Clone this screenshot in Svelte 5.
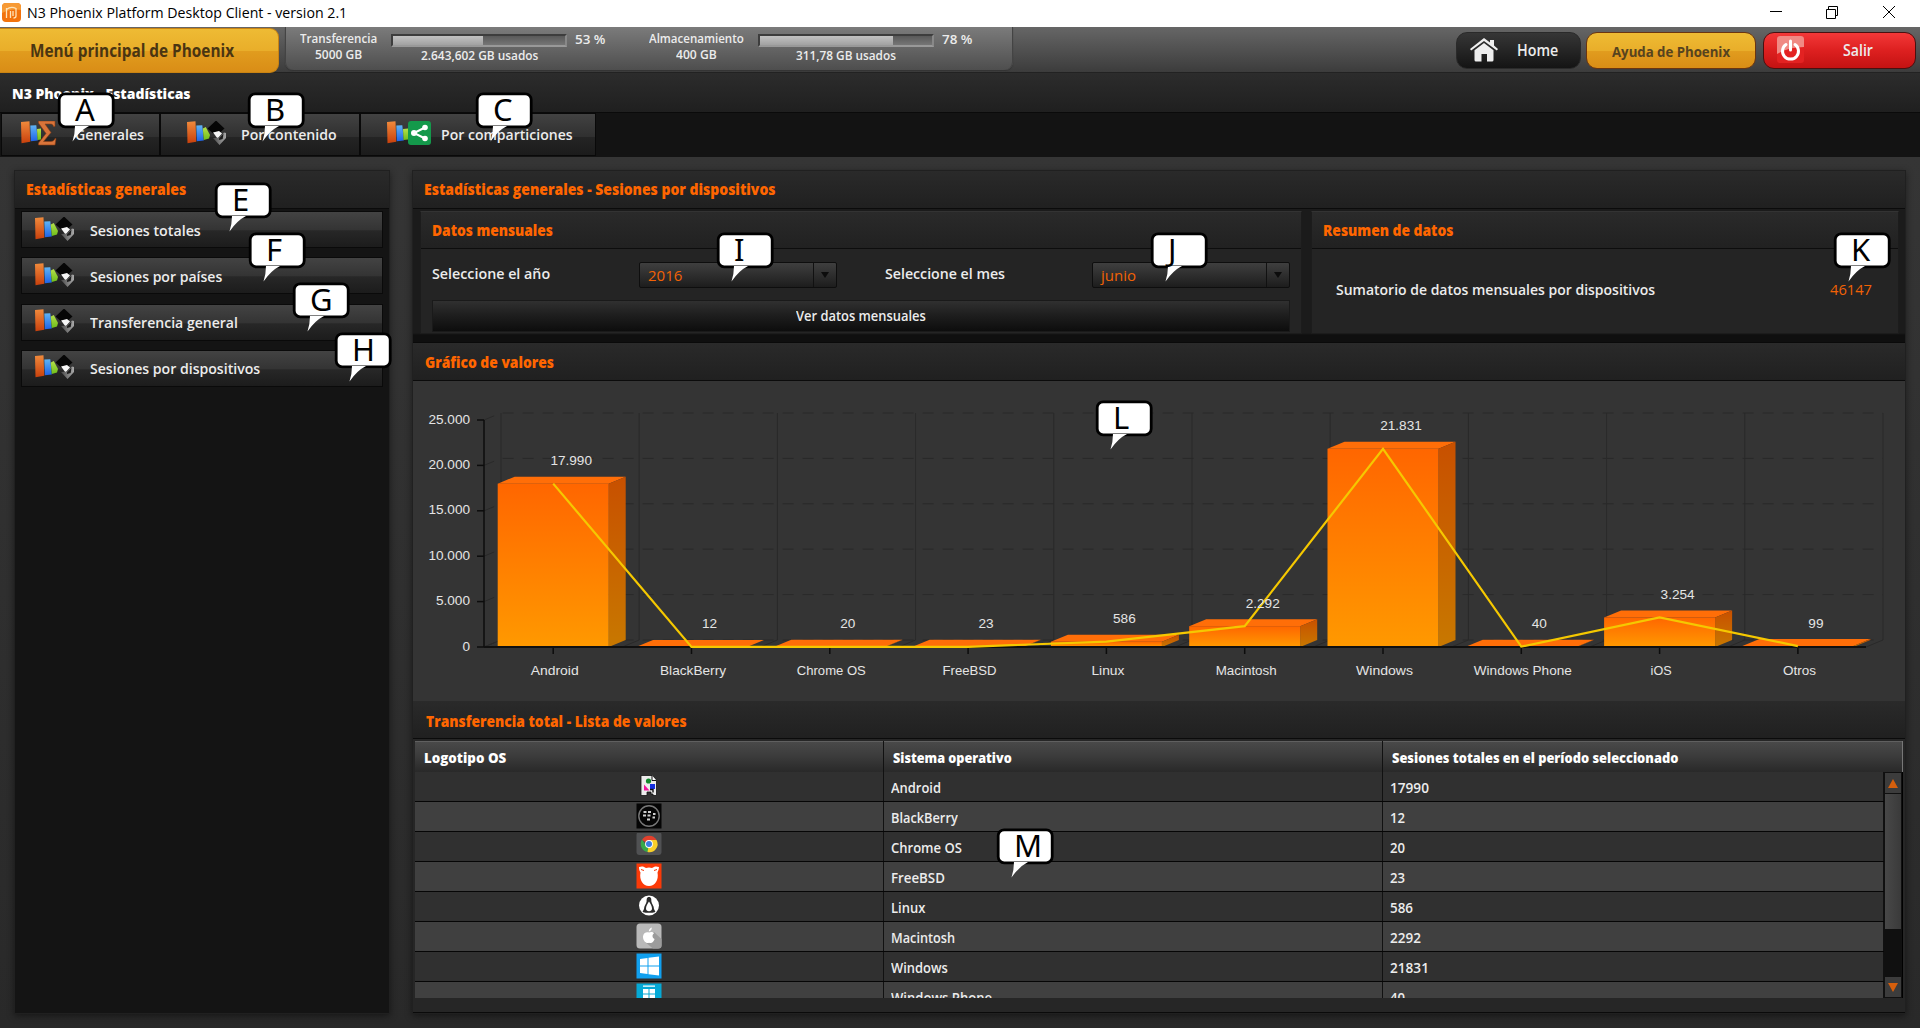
<script>
  // Squeezes a run of text horizontally so that it takes exactly `width` pixels.
  function fit(node, width) {
    const natural = node.offsetWidth;
    if (!natural || !width) return;
    node.style.transform = `scaleX(${width / natural})`;
    node.style.marginRight = `${width - natural}px`;
  }

  const usage = [
    { name: 'Transferencia', nameW: 77, total: '5000 GB', totalW: 47, pct: 52, label: '53 %', used: '2.643,602 GB usados', usedW: 117 },
    { name: 'Almacenamiento', nameW: 95, total: '400 GB', totalW: 41, pct: 77.5, label: '78 %', used: '311,78 GB usados', usedW: 100 }
  ];

  const tabs = [
    { text: 'Generales', w: 69, kind: 'sigma', cls: 'tab-a' },
    { text: 'Por contenido', w: 96, kind: 'diamond', cls: 'tab-b' },
    { text: 'Por comparticiones', w: 132, kind: 'share', cls: 'tab-c' }
  ];

  const side = [
    { text: 'Sesiones totales', w: 111 },
    { text: 'Sesiones por países', w: 132 },
    { text: 'Transferencia general', w: 148 },
    { text: 'Sesiones por dispositivos', w: 170 }
  ];

  // nameW and cellW are the widths of the name in the chart and in the table.
  const data = [
    { name: 'Android', v: 17990, label: '17.990', nameW: 48, cellW: 50, icon: 'file' },
    { name: 'BlackBerry', v: 12, label: '12', nameW: 66, cellW: 67, icon: 'bb' },
    { name: 'Chrome OS', v: 20, label: '20', nameW: 69, cellW: 71, icon: 'chrome' },
    { name: 'FreeBSD', v: 23, label: '23', nameW: 54, cellW: 54, icon: 'bsd' },
    { name: 'Linux', v: 586, label: '586', nameW: 33, cellW: 34, icon: 'linux' },
    { name: 'Macintosh', v: 2292, label: '2.292', nameW: 61, cellW: 64, icon: 'apple' },
    { name: 'Windows', v: 21831, label: '21.831', nameW: 57, cellW: 57, icon: 'win' },
    { name: 'Windows Phone', v: 40, label: '40', nameW: 98, cellW: 101, icon: 'wp' },
    { name: 'iOS', v: 3254, label: '3.254', nameW: 21, cellW: 22, icon: 'file' },
    { name: 'Otros', v: 99, label: '99', nameW: 33, cellW: 34, icon: 'file' }
  ];

  // Chart geometry, in the pixels of the chart's own box.
  const X0 = 71, Y0 = 266, STEP = 138.3, H = 227, DX = 17, DY = 7;
  const axis = [0, 5000, 10000, 15000, 20000, 25000].map((v) => ({
    y: Y0 - (v / 25000) * H,
    text: v === 0 ? '0' : `${v / 1000}.000`
  }));
  const bars = data.map((d, i) => {
    const c = 140.2 + i * STEP;
    return { ...d, c, l: c - 55.5, r: c + 55.5, y: Y0 - (d.v / 25000) * H };
  });
  const line = bars.map((b) => `${b.c},${b.y}`).join(' ');

  const notes = [
    ['A', 58, 92], ['B', 248, 92], ['C', 476, 92], ['E', 215, 182], ['F', 249, 232], ['G', 293, 282], ['H', 335, 332],
    ['I', 717, 232], ['J', 1151, 232], ['K', 1834, 232], ['L', 1096, 400], ['M', 997, 828]
  ];
</script>

{#snippet t(text, w)}<span class="fit" use:fit={w}>{text}</span>{/snippet}

{#snippet books(kind)}
  <svg class="books" width="46" height="26" viewBox="0 0 46 26">
    <defs>
      <linearGradient id="bo" x1="0" x2="0" y1="0" y2="1"><stop offset="0" stop-color="#f08a3c" /><stop offset="1" stop-color="#c8400c" /></linearGradient>
      <linearGradient id="bb" x1="0" x2="0" y1="0" y2="1"><stop offset="0" stop-color="#5fb4f5" /><stop offset="1" stop-color="#1f63e6" /></linearGradient>
      <linearGradient id="bg" x1="0" x2="0" y1="0" y2="1"><stop offset="0" stop-color="#b4e04a" /><stop offset="1" stop-color="#6fbe1a" /></linearGradient>
      <linearGradient id="bs" x1="0" x2="1" y1="0" y2="0"><stop offset="0" stop-color="#4a4a4a" /><stop offset="1" stop-color="#a8a8a8" /></linearGradient>
    </defs>
    <path d="M0 1l8.500-.7.8 20.500-8.800 1.500z" fill="url(#bo)" />
    <path d="M9.300 4.500l6-.3 1.500 15.300-7 .8z" fill="url(#bb)" />
    {#if kind === 'sigma'}
      <path d="M16 8l4-.5v11l-3.500.5z" fill="url(#bg)" />
      <path d="M17.500 0H34v5.500h-1.500c-.5-2-1.500-2.500-3.500-2.500h-5l6 8.500-7.500 9h7c2.500 0 3.500-.8 4.500-3H35L34 24H17.500v-2l7.500-9.500-7.500-10.500z" fill="#d9743a" stroke="#8a3c14" stroke-width=".6" />
    {:else if kind === 'share'}
      <path d="M16 8l5-.5v11l-4.500.5z" fill="url(#bg)" />
      <rect x="21" y="0" width="23" height="24" rx="3" fill="#14994b" />
      <path d="M38 6.500l-11 5.500 11 5.500" fill="none" stroke="#fff" stroke-width="2" />
      <circle cx="38" cy="6.500" r="2.800" fill="#fff" /><circle cx="27" cy="12" r="3" fill="#fff" /><circle cx="38" cy="17.500" r="2.800" fill="#fff" />
    {:else}
      <path d="M15.800 7.500l3-1.500 4.200 8-1 3.500-5.200 1.500z" fill="url(#bg)" />
      <path d="M29-.5L37.500 7.500 29 15l-8.500-7.500z" fill="#060606" />
      <path d="M26 11.500l6-1.500 3 2.500-4.500 5z" fill="#f6f6f6" />
      <path d="M26 17l6.500-.5L37 11.500l2 .5v5L32.500 24z" fill="url(#bs)" />
      <path d="M32 17.500l4.500-5-.8 5.500-3.700 1z" fill="#1c1c1c" />
    {/if}
  </svg>
{/snippet}

{#snippet os(icon)}
  <svg class="os" width="26" height="26" viewBox="0 0 26 26">
    {#if icon === 'file'}
      <path d="M5 2.500h11l4.500 5v15H17V21h-2v-2h-4v3.500H5z" fill="#ececec" stroke="#111" stroke-width=".8" />
      <path d="M16 2.500v5h4.500" fill="#fff" stroke="#111" stroke-width="1" />
      <circle cx="12.500" cy="8" r="2.600" fill="#11892b" />
      <path d="M8 11.500v6h5.500z" fill="#f0149c" />
      <rect x="14" y="11" width="5" height="5" fill="#1430e0" />
      <path d="M14 16.500h3v3" fill="none" stroke="#111" stroke-width="1.400" />
    {:else if icon === 'bb'}
      <rect x=".5" y=".5" width="25" height="25" fill="#050505" />
      <circle cx="13" cy="13" r="10.200" fill="none" stroke="#777" stroke-width="1.400" />
      <path d="M7.500 9h3M12 9h3M7 12.500h3M11.500 12.500h3M17 11h2.500M16.500 14.500h2.500M11 16.500h3" stroke="#cfcfcf" stroke-width="2" />
    {:else if icon === 'chrome'}
      <rect x=".5" y="-1" width="25" height="23" rx="3" fill="#505153" />
      <path d="M13 11L6 7a8.200 8.200 0 0 1 14.500 0z" fill="#e2402c" />
      <path d="M13 11h-4l-3-4.500a8.200 8.200 0 0 0 5.500 12.500l3-5z" fill="#38a84a" />
      <path d="M13 11l1-4h6.500a8.200 8.200 0 0 1-9 12z" fill="#f8cf2a" />
      <circle cx="13" cy="11" r="3.900" fill="#fff" /><circle cx="13" cy="11" r="3" fill="#3c7de0" />
    {:else if icon === 'bsd'}
      <rect x=".5" y=".5" width="25" height="25" fill="#fb3a08" />
      <path d="M3 4c3-1 5-.5 7 1 2-.8 4-.8 6 0 2-1.500 4-2 7-1-.3 2.500-.8 4-1.500 5.500C23 17 19 23 13 23S3 17 4.500 9.500C3.500 8 3 6.500 3 4z" fill="#fff" />
      <path d="M5 6.500l3 1M21 6.500l-3 1" stroke="#fb3a08" stroke-width="1" />
    {:else if icon === 'linux'}
      <circle cx="13" cy="12.500" r="10" fill="#fff" />
      <path d="M13 4c-2.600 0-2.300 2.800-2.400 4.500-.3 2.200-2.600 4.500-2.600 7.500L6.500 19l3 .8h7l3-.8-1.500-3c0-3-2.300-5.300-2.600-7.500C15.300 6.800 15.600 4 13 4z" fill="#2c2c2c" />
      <path d="M13 8.500c-1.500 2.500-3 4.500-3 7 0 1.800 1.300 2.700 3 2.700s3-.9 3-2.700c0-2.500-1.500-4.500-3-7z" fill="#fff" />
    {:else if icon === 'apple'}
      <rect x=".5" y=".5" width="25" height="25" rx="3.500" fill="#b9b9b9" />
      <path d="M18 9l7.500 7v7q0 2.500-3 2.500H17L9 19z" fill="#9c9c9c" />
      <path d="M13 9.500c1-.6 3.500-1.300 5 .7-2.300 1.800-1.700 4.800.6 5.800-.9 2.600-2.600 5-5.600 3.800-3 1.200-6.200-2.300-6-6.300.2-3.500 3.500-5 6-4zM12.800 8.500c0-2 1.400-3.600 3-4 .1 2-1.300 3.800-3 4z" fill="#fff" />
    {:else if icon === 'win'}
      <rect x=".5" y=".5" width="25" height="25" fill="#11a0ef" />
      <path d="M4 6l7.500-1v7.500H4zM12.500 4.800L23 3.500v9H12.500zM4 13.500h7.500V21L4 20zM12.500 13.500H23v9l-10.500-1.300z" fill="#fff" />
    {:else}
      <rect x=".5" y=".5" width="25" height="25" fill="#05a9d6" />
      <path d="M7 2.500h12v1.300H7zM7 6h5.500v4.500H7zM13.500 6H19v4.500h-5.500zM7 11.500h5.500V16H7zM13.500 11.500H19V16h-5.500z" fill="#fff" />
    {/if}
  </svg>
{/snippet}

<div class="app">
  <header class="titlebar">
    <svg class="logo" width="19" height="19" viewBox="0 0 19 19">
      <rect width="19" height="19" rx="4" fill="#f2720c" /><path d="M0 4q0-4 4-4h11q4 0 4 4v3Q9 5 0 10z" fill="#f79a35" />
      <path d="M4.500 5v10M4.500 6.500Q9 3 14 5.500V13q0 2-2.500 2M8.500 8v7M11 8v5" fill="none" stroke="#ffe3b8" stroke-width="1.300" />
    </svg>
    <span class="app-title">{@render t('N3 Phoenix Platform Desktop Client - version 2.1', 320)}</span>
    <svg class="win-ctl" width="126" height="14" viewBox="0 0 126 14" fill="none" stroke="#000" stroke-width="1">
      <path d="M0 6.500h12M56.500 4.500h9v9h-9zM58.500 4.500v-3h9v9h-2" />
      <path d="M113 1l12 12M125 1l-12 12" />
    </svg>
  </header>

  <div class="topbar">
    <button class="menu-btn">{@render t('Menú principal de Phoenix', 204)}</button>
    <div class="usage">
      {#each usage as u}
        <div class="meter">
          <div class="meter-name">
            <div>{@render t(u.name, u.nameW)}</div>
            <div>{@render t(u.total, u.totalW)}</div>
          </div>
          <div class="meter-main">
            <div class="bar"><div class="bar-fill" style="width: {u.pct}%"></div></div>
            <div>{@render t(u.used, u.usedW)}</div>
          </div>
          <div class="meter-pct">{@render t(u.label, 30)}</div>
        </div>
      {/each}
    </div>
    <nav class="actions">
      <button class="act home">
        <svg width="28" height="24" viewBox="0 0 28 24" fill="#eee">
          <path d="M14 0l6 4.500V2h4v5.500l4 3.500-1.200 1.500L14 3 1.200 12.500 0 11z" />
          <path d="M14 5l9.500 7.200V22q0 1.500-1.500 1.500h-5V16h-5.500v7.500H6Q4.500 23.500 4.500 22v-9.800z" />
        </svg>
        {@render t('Home', 41)}
      </button>
      <button class="act help">{@render t('Ayuda de Phoenix', 118)}</button>
      <button class="act exit">
        <svg width="27" height="28" viewBox="0 0 27 28">
          <rect width="27" height="27" rx="3" fill="#e32222" /><path d="M0 3q0-3 3-3h21q3 0 3 3v8Q12 11 0 18z" fill="#f08a84" />
          <path d="M9 8.500a8 8 0 1 0 9 0" fill="none" stroke="#fff" stroke-width="3" stroke-linecap="round" /><path d="M13.500 5v9" stroke="#fff" stroke-width="3" stroke-linecap="round" />
        </svg>
        {@render t('Salir', 30)}
      </button>
    </nav>
  </div>

  <div class="section-title">{@render t('N3 Phoenix - Estadísticas', 179)}</div>

  <nav class="tabs">
    {#each tabs as tab}
      <button class="tab {tab.cls}">{@render books(tab.kind)}{@render t(tab.text, tab.w)}</button>
    {/each}
  </nav>

  <main>
    <aside class="panel">
      <h2>{@render t('Estadísticas generales', 160)}</h2>
      <div class="side-list">
        {#each side as s}
          <button class="side-btn">{@render books('diamond')}{@render t(s.text, s.w)}</button>
        {/each}
      </div>
    </aside>

    <section class="panel content">
      <h2>{@render t('Estadísticas generales - Sesiones por dispositivos', 352)}</h2>
      <div class="filters">
        <div class="box monthly">
          <h3>{@render t('Datos mensuales', 121)}</h3>
          <div class="fields">
            <label class="f1">{@render t('Seleccione el año', 118)}</label>
            <div class="combo"><span class="val">{@render t('2016', 34)}</span><i></i></div>
            <label class="f2">{@render t('Seleccione el mes', 120)}</label>
            <div class="combo"><span class="val">{@render t('junio', 35)}</span><i></i></div>
          </div>
          <button class="view-btn">{@render t('Ver datos mensuales', 130)}</button>
        </div>
        <div class="box summary">
          <h3>{@render t('Resumen de datos', 130)}</h3>
          <div class="sum-row">
            {@render t('Sumatorio de datos mensuales por dispositivos', 319)}
            <span class="sum">{@render t('46147', 42)}</span>
          </div>
        </div>
      </div>

      <div class="inner">
        <h2>{@render t('Gráfico de valores', 129)}</h2>
        <svg class="chart" width="1492" height="320" viewBox="0 0 1492 320">
          <defs>
            <linearGradient id="front" x1="0" x2="0" y1="0" y2="1"><stop offset="0" stop-color="#ff6600" /><stop offset="1" stop-color="#ff9900" /></linearGradient>
            <linearGradient id="flank" x1="0" x2="0" y1="0" y2="1"><stop offset="0" stop-color="#c85000" /><stop offset="1" stop-color="#c87800" /></linearGradient>
          </defs>
          {#each axis as a}
            <path class="grid dash" d="M{X0} {a.y}l{DX} {-DY}H1470" />
            <path class="axis" d="M64 {a.y}H{X0}" />
            <text class="ylab" x="57" y={a.y + 3.500}>{a.text}</text>
          {/each}
          {#each { length: 11 } as _, i}
            <path class="grid" d="M{X0 + DX + i * 138.200} {Y0 - H - DY}v{H}l{-DX} {DY}" />
          {/each}
          <path class="axis" d="M{X0} {Y0 - H}V{Y0}" />
          <path class="floor" d="M{X0} {Y0}H1453" />
          {#each bars as b}
            <path d="M{b.l} {b.y}l{DX} {-DY}h111l{-DX} {DY}z" fill="#ff6e08" />
            <path d="M{b.r} {b.y}l{DX} {-DY}V{Y0 - DY}L{b.r} {Y0}z" fill="url(#flank)" />
            <rect x={b.l} y={b.y} width="111" height={Y0 - b.y} fill="url(#front)" />
            <path class="axis" d="M{b.c} {Y0}v7" />
            <text class="clab" x={b.c + 1.500} y="294" textLength={b.nameW} lengthAdjust="spacingAndGlyphs">{b.name}</text>
          {/each}
          <path class="floor" d="M{X0} {Y0}H1453" />
          <polyline points={line} fill="none" stroke="#f5c800" stroke-width="2.200" />
          {#each bars as b}
            <text class="clab" x={b.c + 18} y={b.y - 18.500}>{b.label}</text>
          {/each}
        </svg>

        <h2 class="list-title">{@render t('Transferencia total - Lista de valores', 261)}</h2>
        <div class="table">
          <div class="thead">
            <div>{@render t('Logotipo OS', 82)}</div>
            <div>{@render t('Sistema operativo', 119)}</div>
            <div>{@render t('Sesiones totales en el período seleccionado', 286)}</div>
          </div>
          <div class="tbody">
            <div class="rows">
              {#each data.slice(0, 8) as d}
                <div class="row">
                  <div class="logo-cell">{@render os(d.icon)}</div>
                  <div>{@render t(d.name, d.cellW)}</div>
                  <div>{@render t(String(d.v), String(d.v).length * 7.700)}</div>
                </div>
              {/each}
            </div>
            <div class="scroll">
              <div class="sb"><i class="up"></i></div>
              <div class="thumb"></div>
              <div class="sb"><i class="down"></i></div>
            </div>
          </div>
        </div>
      </div>
    </section>
  </main>

  <svg class="notes" width="1920" height="1028" viewBox="0 0 1920 1028">
    {#each notes as [letter, x, y]}
      <g transform="translate({x} {y})">
        <rect x="1.200" y="1.800" width="54" height="33" rx="6" fill="#fff" stroke="#000" stroke-width="2.800" />
        <path d="M17 34h14Q22 38.500 14.500 49.500q2.500-8 2.500-15.500z" fill="#fff" />
        <text x="17" y="28.500">{letter}</text>
      </g>
    {/each}
  </svg>
</div>

<style>
  :global(body) { margin: 0; background: #2d2d2d; overflow: hidden; }
  .app {
    position: relative; width: 1920px; height: 1028px; overflow: hidden;
    display: grid; grid-template-rows: 27px 46px 40px 44px 1fr;
    font: 600 15px/18px 'Open Sans', 'Noto Sans', sans-serif; color: #ececec;
    background: linear-gradient(#353535 157px, #292929);
  }
  button { font: inherit; color: inherit; border: 0; margin: 0; padding: 0; box-sizing: border-box; }
  h2, h3 { margin: 0; font: inherit; font-weight: 800; color: #ff6600; }
  .fit { display: inline-block; white-space: nowrap; transform-origin: 0 50%; flex: none; }

  .titlebar { background: #fff; display: flex; align-items: flex-start; color: #000; font: 400 15px/18px 'Open Sans', sans-serif; }
  .logo { margin: 3px 6px 0 2px; }
  .app-title { margin-top: 3px; }
  .win-ctl { margin: 5px 25px 0 auto; }

  .topbar { display: flex; background: linear-gradient(#666, #3b3b3b); box-shadow: inset 0 -1px #222; }
  .menu-btn {
    width: 279px; height: 45px; margin-top: 1px; border-radius: 0 9px 9px 0; padding: 0 13px 0 0;
    color: #4a3512; font-weight: 700; font-size: 17px; border: 1px solid #c98312; border-left: 0;
    background: linear-gradient(#eebb34, #e9ae2a 50%, #e19c1e 52%, #d98d16);
  }
  .usage {
    width: 728px; height: 43px; margin-left: 6px; box-sizing: border-box; padding: 3px 0 0 15px; display: flex; gap: 43px;
    border-radius: 0 0 8px 8px; background: linear-gradient(#7b7b7b, #4e4e4e); box-shadow: 0 1px 1px #333, inset -1px 0 #444, inset 1px 0 #444;
    font-size: 13px; line-height: 16px;
  }
  .meter { display: flex; }
  .meter-name { text-align: center; margin-right: 14px; }
  .meter-main { width: 176px; text-align: center; }
  .bar { box-sizing: border-box; height: 13px; margin: 4px 0 0; border: 2px solid #3d3d3d; border-right-color: #888; border-bottom-color: #999; background: linear-gradient(#595959, #767676); }
  .bar-fill { height: 100%; background: linear-gradient(#c2c2c2, #a2a2a2); }
  .meter-pct { margin-left: 8px; padding-top: 1px; }

  .actions { margin-left: auto; padding: 5px 5px 0 0; display: flex; gap: 5px; }
  .act { height: 37px; display: flex; align-items: center; border-radius: 11px; border: 1px solid #2a2a2a; font-size: 16px; padding-bottom: 2px; }
  .home { width: 125px; background: linear-gradient(#363636, #141414); padding-left: 13px; gap: 19px; }
  .help { width: 170px; background: linear-gradient(#eebb34, #e9ae2a 50%, #e19c1e 52%, #d98d16); color: #56431f; font-weight: 700; font-size: 14px; padding: 2px 0 0 25px; border-color: #6b3510; }
  .exit { width: 153px; margin-left: 2px; background: linear-gradient(#f33838, #dd2020 50%, #c41212); padding-left: 13px; gap: 39px; border-color: #4a1010; }

  .section-title { background: linear-gradient(#2c2c2c, #1f1f1f); padding: 12px 0 0 12px; font-weight: 800; font-size: 14.500px; color: #fff; box-shadow: inset 0 -1px #0a0a0a; }

  .tabs { background: #131313; display: flex; gap: 2px; padding: 1px 0 0 2px; }
  .tab { height: 41px; display: flex; align-items: center; padding-bottom: 1px; background: linear-gradient(#424242, #303030 55%, #242424 57%, #1b1b1b); box-shadow: 0 0 0 1px #090909; }
  .tab .books { margin-top: -1px; }
  .tab-a { width: 157px; padding-left: 19px; gap: 8px; }
  .tab-b { width: 198px; padding-left: 26px; gap: 8px; }
  .tab-c { width: 234px; padding-left: 26px; gap: 8px; }

  main { display: flex; gap: 22px; padding: 13px 15px 14px 14px; box-sizing: border-box; min-height: 0; }
  .panel { box-sizing: border-box; background: #141414; border: 1px solid #202020; box-shadow: 0 2px 7px rgba(0, 0, 0, 0.45); }
  h2 { height: 38px; box-sizing: border-box; padding: 9px 11px 0; background: linear-gradient(#2a2a2a, #202020); border-bottom: 1px solid #0b0b0b; }
  aside { width: 376px; }
  .side-list { padding: 2px 6px; display: grid; gap: 9.300px; }
  .side-btn {
    height: 37px; display: flex; align-items: center; padding-left: 13px; gap: 9px; border: 1px solid #0a0a0a;
    background: linear-gradient(#434343, #343434 50%, #272727 54%, #1c1c1c);
  }

  .content { width: 1494px; display: flex; flex-direction: column; }
  .filters { display: flex; gap: 9px; padding: 2px 6px 0 7px; height: 133px; box-sizing: border-box; background: linear-gradient(#1b1b1b 124px, #0f0f0f 126px); }
  .box { height: 123px; box-sizing: border-box; background: #242424; border: 1px solid #1c1c1c; border-top-color: #333; }
  .box h3 { height: 37px; box-sizing: border-box; padding: 9px 11px 0; background: linear-gradient(#2a2a2a, #212121); border-bottom: 1px solid #0d0d0d; }
  .monthly { width: 883px; }
  .summary { width: 588px; }
  .fields { display: flex; align-items: center; height: 26px; padding: 13px 0 12px 11px; }
  .f1 { width: 207px; margin-top: -4px; }
  .f2 { width: 207px; margin: -4px 0 0 48px; }
  .combo { width: 198px; height: 26px; box-sizing: border-box; display: flex; align-items: center; border: 1px solid #0e0e0e; border-radius: 2px; background: linear-gradient(#3f3f3f, #1d1d1d); color: #f26205; font-weight: 500; }
  .val { flex: 1; padding-left: 8px; }
  .combo i { width: 22px; height: 100%; border-left: 1px solid #111; display: grid; place-items: center; }
  .combo i::after { content: ''; border: 4.500px solid transparent; border-top: 6px solid #0c0c0c; border-bottom: 0; }
  .view-btn { display: block; width: 858px; height: 32px; margin-left: 11px; border: 1px solid #1a1a1a; background: linear-gradient(#303030, #1d1d1d 50%, #0d0d0d); font-size: 14px; }
  .sum-row { display: flex; justify-content: space-between; padding: 31px 26px 0 24px; }
  .sum { color: #f26205; font-weight: 500; }

  .inner { background: #262626; height: 671px; border: 1px solid #0a0a0a; border-width: 1px 0; box-sizing: border-box; }
  .inner h2 { padding: 10px 12px 0; }
  .chart { display: block; background: #343434; font: 13.600px 'Liberation Sans', sans-serif; fill: #e4e4e4; }
  .grid { fill: none; stroke: #292929; stroke-width: 1; }
  .dash { stroke-dasharray: 11 9; }
  .axis { fill: none; stroke: #0c0c0c; stroke-width: 1.500; }
  .floor { fill: none; stroke: #101010; stroke-width: 2; }
  .ylab { text-anchor: end; }
  .clab { text-anchor: middle; }
  .inner .list-title { padding: 11px 13px 0; }

  .table { margin: 2px 0 0 2px; width: 1488px; }
  .thead, .row { display: grid; grid-template-columns: 469px 499px 1fr; }
  .thead { height: 31px; background: linear-gradient(#4a4a4a, #3b3b3b 50%, #292929); box-shadow: inset 0 1px #606060; font-weight: 800; font-size: 14px; color: #fff; }
  .thead > div { padding: 8px 0 0 9px; border-right: 1px solid #111; }
  .thead > div:last-child { border-right-color: #777; }
  .tbody { display: flex; height: 226px; overflow: hidden; font-size: 14.500px; }
  .rows { flex: 1; }
  .row { height: 30px; box-sizing: border-box; border-bottom: 1px solid #060606; background: #303030; }
  .row:nth-child(even) { background: #404040; }
  .row > div { padding: 7px 0 0 7px; border-right: 1px solid #111; height: 29px; box-sizing: border-box; }
  .row > .logo-cell { padding: 1px 0 0; text-align: center; line-height: 0; }
  .scroll { width: 19px; background: #101010; display: flex; flex-direction: column; padding: 1px; box-sizing: border-box; border-right: 1px solid #000; }
  .sb { height: 20px; display: grid; place-items: center; background: #3c3c3c; }
  .thumb { margin: 1px 0 auto; height: 135px; background: linear-gradient(90deg, #484848, #3a3a3a); }
  .sb i { border: 5px solid transparent; }
  .sb .up { border-top: 0; border-bottom: 9px solid #d65f0c; }
  .sb .down { border-bottom: 0; border-top: 9px solid #d65f0c; }

  .notes { position: absolute; left: 0; top: 0; pointer-events: none; font: 400 31px 'Noto Sans', sans-serif; fill: #000; }
</style>
